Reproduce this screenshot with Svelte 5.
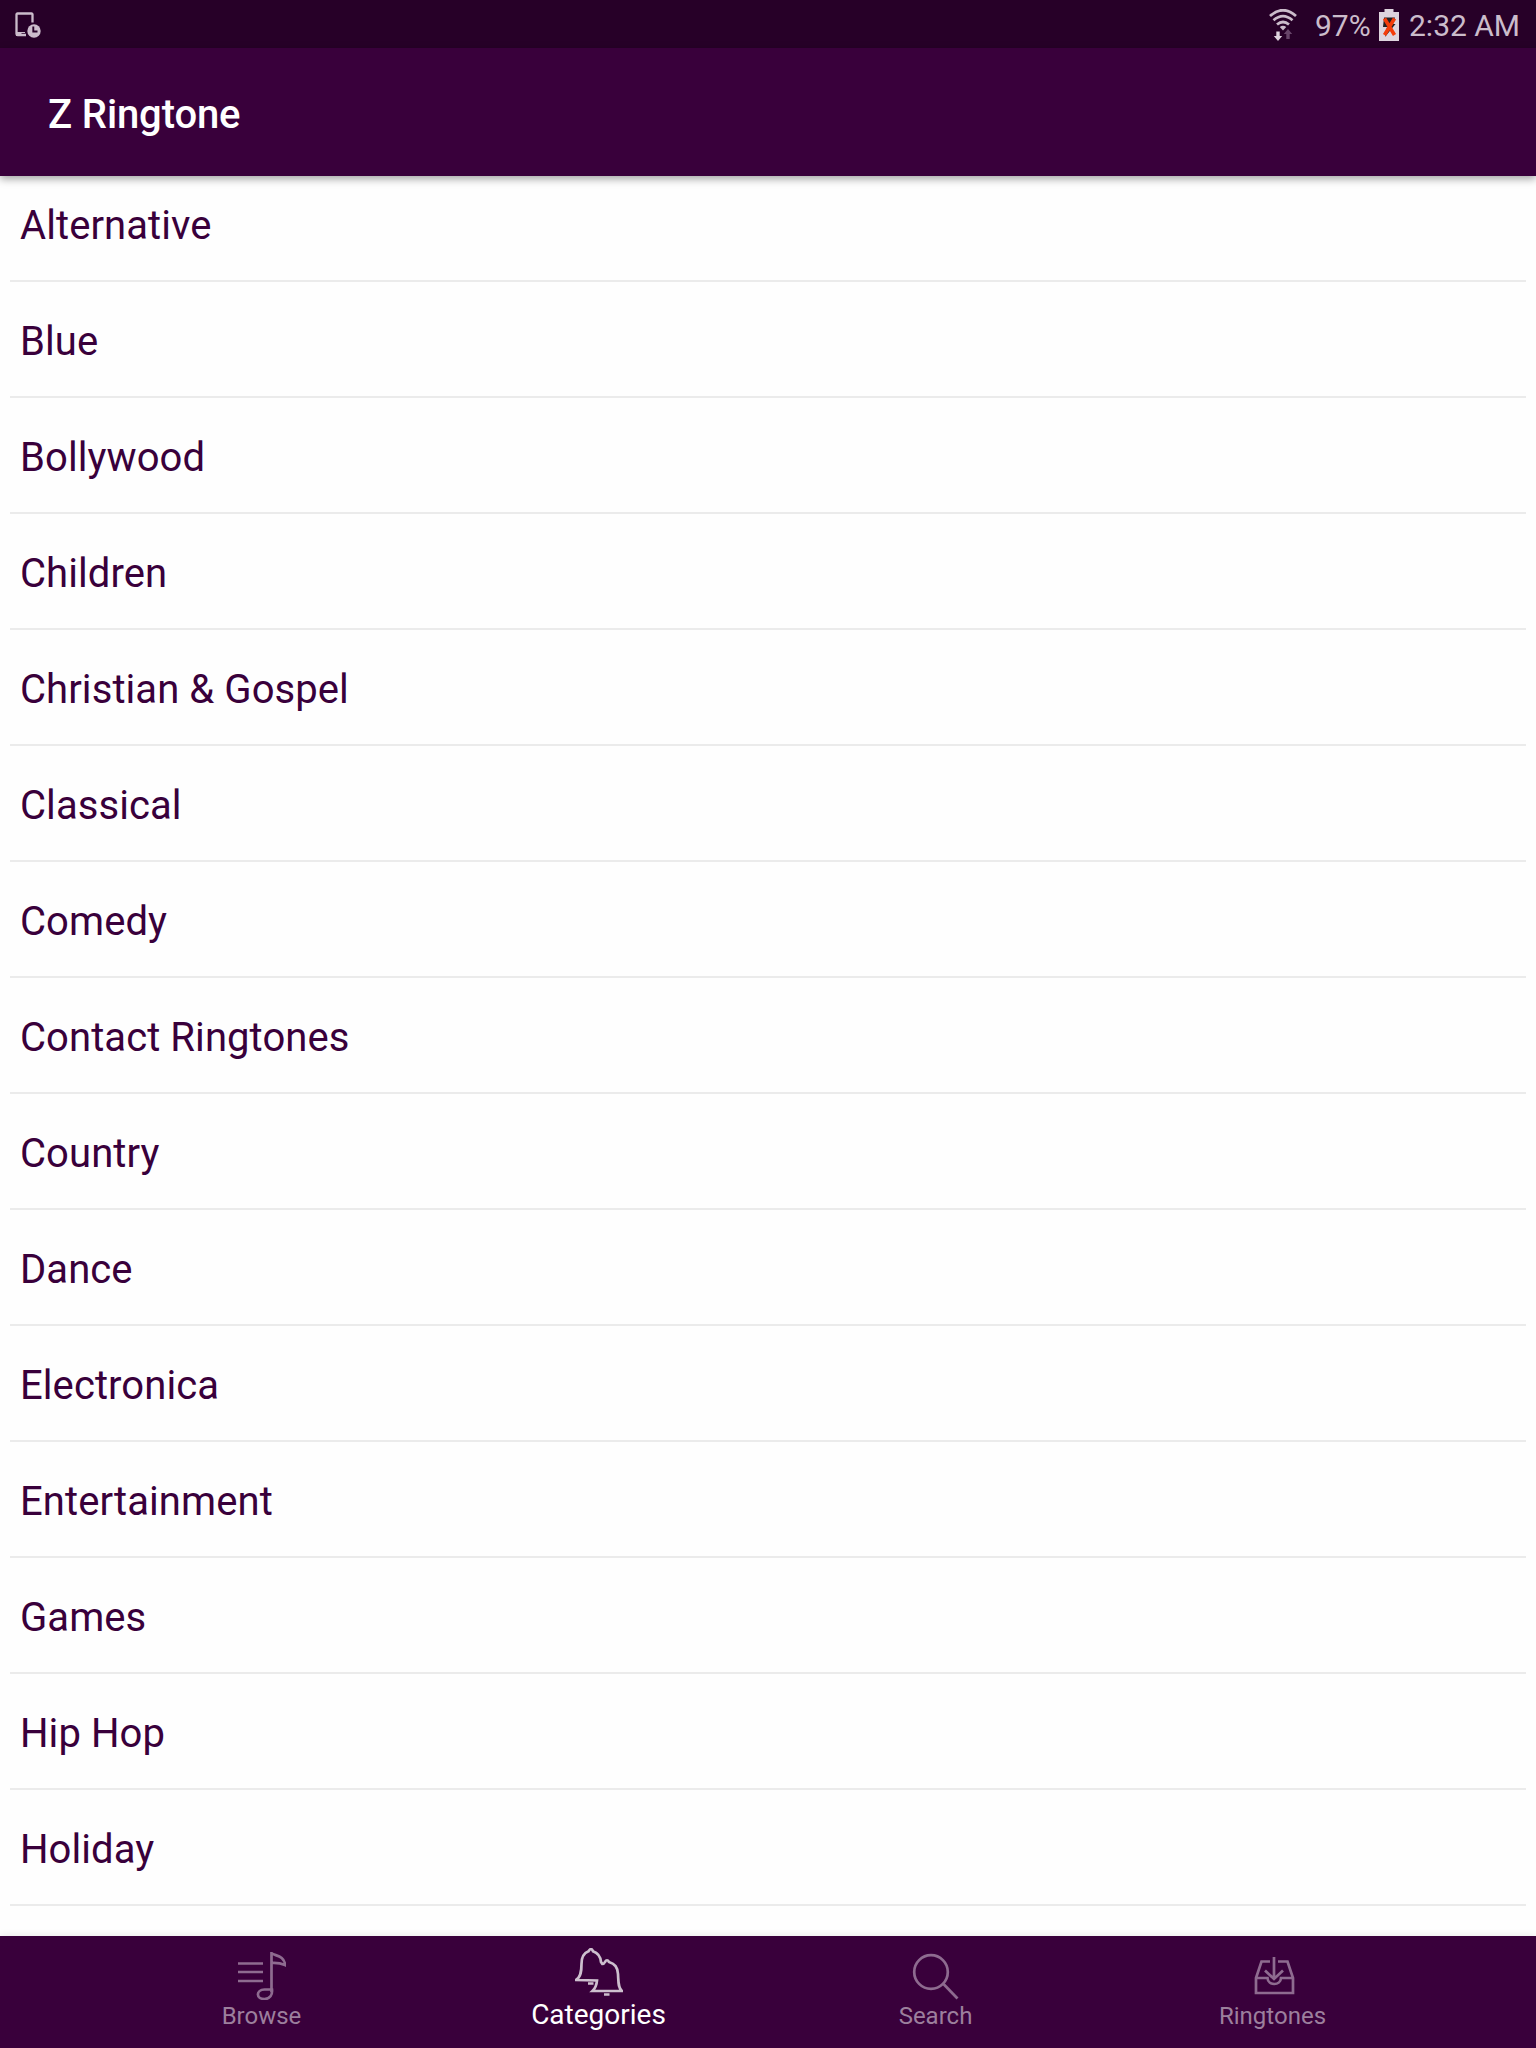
<script>
  const categories = [
    "Alternative",
    "Blue",
    "Bollywood",
    "Children",
    "Christian & Gospel",
    "Classical",
    "Comedy",
    "Contact Ringtones",
    "Country",
    "Dance",
    "Electronica",
    "Entertainment",
    "Games",
    "Hip Hop",
    "Holiday"
  ];

  const tabs = ["Browse", "Categories", "Search", "Ringtones"];

  let active = $state("Categories");
</script>

<div class="screen">
  <div class="status-bar">
    <svg class="device" width="26" height="26" viewBox="0 0 26 26">
      <path d="M17.500 10.500V2.500Q17.500 1.500 16.500 1.500H2.500Q1.500 1.500 1.500 2.500V22Q1.500 23 2.500 23H11" fill="none" stroke="#cbbccb" stroke-width="2.300" />
      <path d="M1 20H10V21H6.500V23H11V24H1z" fill="#cbbccb" />
      <circle cx="19" cy="19" r="6.700" fill="#cbbccb" />
      <path d="M18.300 14.500V19.500H22.500" fill="none" stroke="#270028" stroke-width="1.900" />
    </svg>
    <div class="status-right">
      <svg class="wifi" width="28" height="32" viewBox="0 0 28 32">
        <g fill="none" stroke="#cbbccb" stroke-width="2.800">
          <path d="M1 7Q14 -4.500 27 7" />
          <path d="M4.500 11.300Q14 3 23.500 11.300" />
          <path d="M8 15.500Q14 10.500 20 15.500" />
        </g>
        <path d="M10.800 18Q14 15.500 17.200 18L14 21.500z" fill="#cbbccb" />
        <path d="M7.300 22.500H10.700V27H13.200L9 32L4.800 27H7.300z" fill="#ded4de" />
        <path d="M17.300 30H20.700V25H23.200L19 20L14.800 25H17.300z" fill="#68456a" />
      </svg>
      <span class="percent">97%</span>
      <svg class="battery" width="20" height="32" viewBox="0 0 20 32">
        <path d="M0 3H5.500V0H14.500V3H20V32H0z" fill="#ded4de" />
        <path d="M5 8.500H16L14 15H16.500L6 28L8 18H4z" fill="#242024" />
        <path d="M5.500 9.500L15.500 26M15.500 9.500L5.500 26" stroke="#f43c0b" stroke-width="3.600" />
      </svg>
      <span class="time">2:32 AM</span>
    </div>
  </div>

  <header>
    <h1>Z Ringtone</h1>
  </header>

  <ul>
    {#each categories as category}
      <li>{category}</li>
    {/each}
  </ul>

  <nav>
    {#each tabs as tab}
      <button class:active={active === tab} onclick={() => (active = tab)}>
        <svg width="48" height="48" viewBox="0 0 48 48">
          {#if tab === "Browse"}
            <path d="M0 11.500H25M0 20H25M0 29H25" />
            <path d="M33.500 40V1C36 4 46.500 3 47 13Q41 10.500 33.500 11" />
            <path d="M34 37.500H26.500C17.500 38 18 47 26.500 47C32 47 34.500 43 34 37.500z" />
          {:else if tab === "Categories"}
            <path d="M1 32C6 29 6.500 23 6.500 16C6.500 9 9 5 13.500 3.300Q15 1 16 1Q17 1 18 3.300C23 5 25.500 9 26 14L27.300 16Q29 16 30 14Q32 10.500 34 14C40 16 42.500 19 43 26C43.500 34 43 40 47 43H17.500Q21.500 39 22 32.500z" />
            <path d="M13 35.500H18.500M29 46.500H34.500" />
          {:else if tab === "Search"}
            <circle cx="19" cy="20" r="16.800" />
            <path d="M31 31.500L45.500 46.500" />
          {:else}
            <path d="M21 9.500H12.500L7 26V41H44V26L38.500 9.500H29" />
            <path d="M7 26H18.500C19 34 31.500 34 32 26H44" />
            <path d="M25 5V27M16 18.500L25 27L34 18.500" />
          {/if}
        </svg>
        <span>{tab}</span>
      </button>
    {/each}
  </nav>
</div>

<style>
  :global(body) {
    margin: 0;
  }

  .screen {
    display: flex;
    flex-direction: column;
    width: 1536px;
    height: 2048px;
    overflow: hidden;
    background: #fefefe;
    font-family: Roboto, sans-serif;
  }

  /* status bar */
  .status-bar {
    display: flex;
    justify-content: space-between;
    flex: 0 0 48px;
    height: 48px;
    box-sizing: border-box;
    padding: 0 16px 0 15px;
    background: #270028;
    color: #cbbccb;
    font-size: 30px;
    line-height: 52px;
  }

  .device {
    margin-top: 12px;
  }

  .status-right {
    display: flex;
  }

  .wifi {
    margin: 9px 18px 0 0;
  }

  .percent {
    width: 64px;
  }

  .battery {
    margin: 9px 10px 0 0;
  }

  .time {
    width: 111px;
    white-space: nowrap;
  }

  /* app bar */
  header {
    position: relative;
    z-index: 1;
    display: flex;
    align-items: center;
    flex: 0 0 128px;
    padding: 0 48px;
    background: #39003b;
    box-shadow: 0 3px 8px rgba(0, 0, 0, 0.36);
  }

  h1 {
    margin: 6px 0 0;
    color: #fff;
    font-size: 40px;
    font-weight: 500;
    line-height: 48px;
    letter-spacing: -0.12px;
  }

  /* category list, its first row starts under the app bar */
  ul {
    flex: 1;
    min-height: 0;
    margin: -10px 10px 0;
    padding: 0;
    list-style: none;
  }

  li {
    height: 116px;
    box-sizing: border-box;
    padding: 36px 10px 0;
    border-bottom: 2px solid #ebebeb;
    color: #39003b;
    font-size: 40px;
    line-height: 48px;
    letter-spacing: 0.08px;
  }

  /* bottom tabs */
  nav {
    display: flex;
    justify-content: center;
    flex: 0 0 112px;
    padding-right: 2px;
    background: #39003b;
    box-shadow: 0 0 8px rgba(0, 0, 0, 0.1);
  }

  button {
    display: flex;
    flex-direction: column;
    align-items: center;
    width: 337px;
    padding: 16px 0 0;
    border: 0;
    background: none;
    color: #9c7f9d;
    font-family: inherit;
    font-size: 24px;
    line-height: 32px;
  }

  button svg {
    fill: none;
    stroke: #8e6b90;
    stroke-width: 2.7;
  }

  button.active {
    padding-top: 12px;
    color: #fff;
    font-size: 28px;
    line-height: 37px;
  }

  .active svg {
    stroke: #cdbfce;
  }
</style>
